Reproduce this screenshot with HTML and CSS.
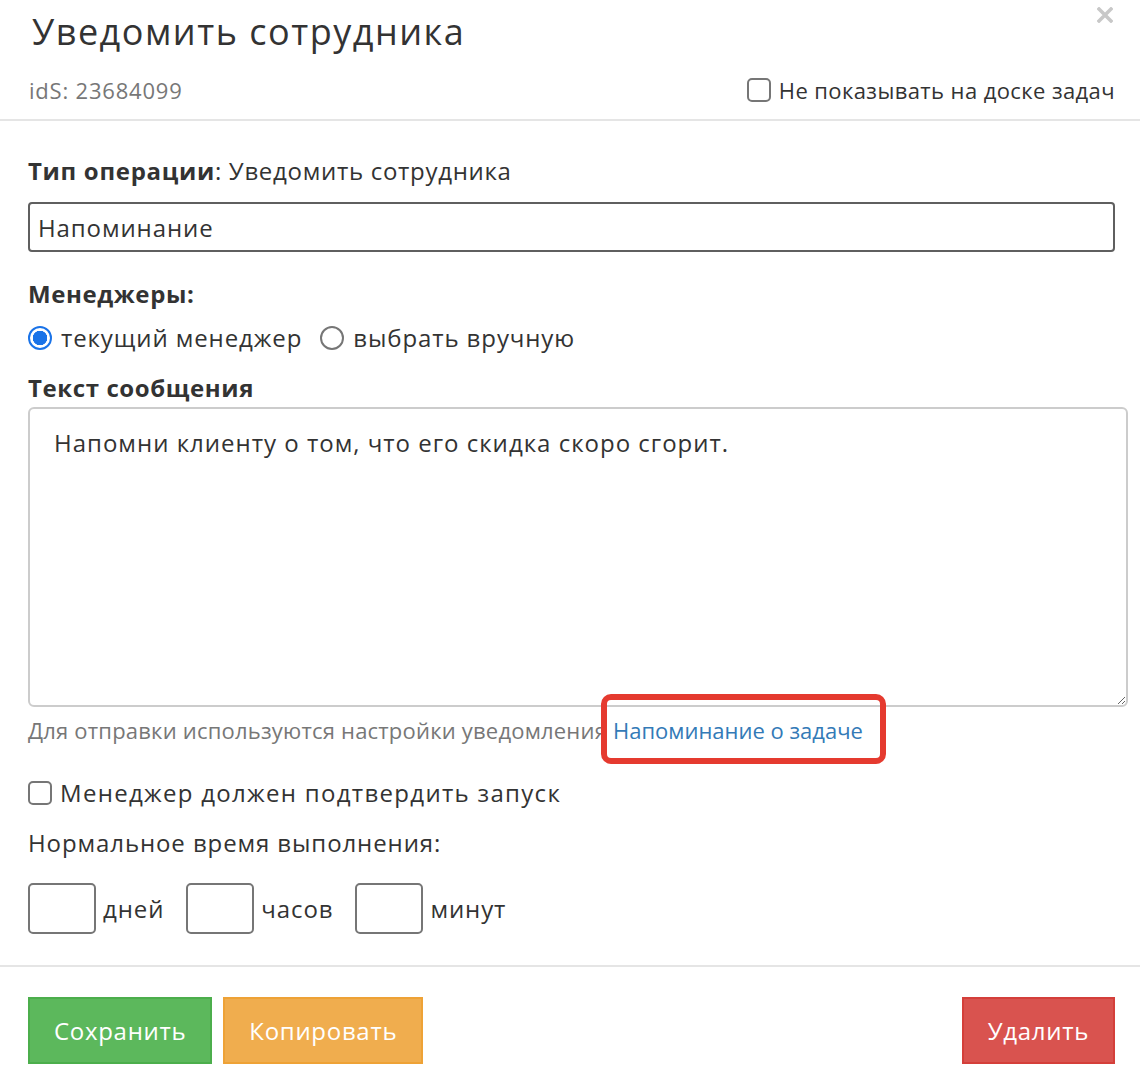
FILE: index.html
```html
<!DOCTYPE html>
<html lang="ru">
<head>
  <meta charset="UTF-8" />
  <title>Уведомить сотрудника</title>
  <link rel="stylesheet" href="styles.css">
</head>
<body>
  <div class="modal">
    <svg class="close" width="16" height="16" viewBox="0 0 16 16" aria-label="Закрыть">
      <path d="M2 2 L14 14 M14 2 L2 14" stroke="#c8c8c8" stroke-width="3.5" stroke-linecap="square" />
    </svg>

    <div class="modal-header">
      <h2>Уведомить сотрудника</h2>
      <div class="header-row">
        <span class="ids">idS: 23684099</span>
        <label class="check"><input type="checkbox" />Не показывать на доске задач</label>
      </div>
    </div>

    <div class="modal-body">
      <p class="op-type"><b>Тип операции</b>: Уведомить сотрудника</p>
      <input class="name-input" type="text" value="Напоминание" />

      <h4 class="managers">Менеджеры:</h4>
      <div class="radios">
        <label class="radio"><input type="radio" name="mgr" checked />текущий менеджер</label>
        <label class="radio"><input type="radio" name="mgr" />выбрать вручную</label>
      </div>

      <h4 class="msg-title">Текст сообщения</h4>
      <textarea class="message">Напомни клиенту о том, что его скидка скоро сгорит.</textarea>
      <p class="hint">Для отправки используются настройки уведомления <a href="#" class="marked">Напоминание о задаче</a></p>

      <label class="check confirm"><input type="checkbox" />Менеджер должен подтвердить запуск</label>

      <p class="time-label">Нормальное время выполнения:</p>
      <div class="time-row">
        <input type="text" class="small-input" /><span>дней</span>
        <input type="text" class="small-input" /><span>часов</span>
        <input type="text" class="small-input" /><span>минут</span>
      </div>
    </div>

    <div class="modal-footer">
      <button class="btn btn-success">Сохранить</button>
      <button class="btn btn-warning">Копировать</button>
      <button class="btn btn-danger">Удалить</button>
    </div>
  </div>
</body>
</html>
```

FILE: styles.css
```css
body {
  margin: 0;
  background: #fff;
  font-family: "Open Sans", Arial, sans-serif;
  color: #333;
  letter-spacing: 0.9px;
}

.modal {
  position: relative;
  width: 1140px;
}

.close {
  position: absolute;
  top: 7px;
  right: 27px;
}

.modal-header {
  padding: 6px 25px 0 29px;
  height: 113px;
  border-bottom: 2px solid #e5e5e5;
}

h2 {
  margin: 0 0 0 3px;
  font-size: 36px;
  font-weight: normal;
  line-height: 52px;
  letter-spacing: 1.5px;
}

.header-row {
  display: flex;
  justify-content: space-between;
  align-items: center;
  height: 30px;
  margin-top: 17px;
}

.ids {
  font-size: 22px;
  color: #777;
  letter-spacing: 0.8px;
}

.check {
  display: flex;
  align-items: center;
  font-size: 22px;
  letter-spacing: 0.4px;
}

input[type="checkbox"] {
  appearance: none;
  width: 24px;
  height: 24px;
  margin: 0 8px 0 0;
  border: 2px solid #767676;
  border-radius: 5px;
  background: #fff;
}

.modal-body {
  height: 846px;
  box-sizing: border-box;
  padding: 36px 25px 0 28px;
  border-bottom: 2px solid #e5e5e5;
}

.op-type {
  margin: 0 0 17px;
  font-size: 24px;
  line-height: 28px;
  letter-spacing: 0.7px;
}

.name-input {
  display: block;
  width: 100%;
  height: 50px;
  box-sizing: border-box;
  padding: 0 8px;
  border: 2px solid #5f5f5f;
  border-radius: 4px;
  font-family: inherit;
  font-size: 24px;
  letter-spacing: 0.9px;
  color: #333;
}

h4 {
  margin: 0;
  font-size: 24px;
  font-weight: bold;
  line-height: 30px;
  letter-spacing: 0.6px;
}

.managers {
  margin-top: 27px;
}

.radios {
  display: flex;
  gap: 18px;
  margin-top: 14px;
  font-size: 24px;
  line-height: 30px;
}

.radio {
  display: flex;
  align-items: center;
}

input[type="radio"] {
  appearance: none;
  width: 24px;
  height: 24px;
  margin: 0 9px 0 0;
  border: 2px solid #767676;
  border-radius: 50%;
  background: #fff;
}

input[type="radio"]:checked {
  border-color: #1a73e8;
  background: radial-gradient(circle, #1a73e8 0, #1a73e8 7px, #fff 7.5px);
}

.msg-title {
  margin-top: 20px;
}

.message {
  display: block;
  width: 1100px;
  height: 300px;
  box-sizing: border-box;
  margin-top: 4px;
  padding: 17px 24px;
  border: 2px solid #ccc;
  border-radius: 6px;
  font-family: inherit;
  font-size: 24px;
  letter-spacing: 1px;
  color: #333;
  resize: both;
}

.hint {
  margin: 8px 0 0;
  font-size: 22px;
  line-height: 30px;
  letter-spacing: 0.2px;
  color: #777;
}

.marked {
  position: relative;
  color: #337ab7;
  text-decoration: none;
  letter-spacing: 0;
}

.marked::after {
  content: "";
  position: absolute;
  left: -12px;
  right: -23px;
  top: -21px;
  bottom: -19px;
  border: 6px solid #e53a2f;
  border-radius: 10px;
}

.confirm {
  margin-top: 33px;
  font-size: 24px;
  line-height: 30px;
  letter-spacing: 1.3px;
}

.time-label {
  margin: 20px 0 0;
  font-size: 24px;
  line-height: 30px;
}

.time-row {
  display: flex;
  align-items: center;
  margin-top: 25px;
  font-size: 24px;
}

.small-input {
  width: 68px;
  height: 51px;
  box-sizing: border-box;
  margin: 0 7px 0 0;
  border: 2px solid #767676;
  border-radius: 5px;
}

.time-row span {
  margin-right: 22px;
}

.modal-footer {
  display: flex;
  gap: 11px;
  padding: 30px 25px 0 28px;
}

.btn {
  height: 67px;
  padding: 0 24px;
  border: 2px solid;
  font-family: inherit;
  font-size: 24px;
  letter-spacing: 0.7px;
  color: #fff;
}

.btn-success {
  background: #5cb85c;
  border-color: #4cae4c;
}

.btn-warning {
  background: #f0ad4e;
  border-color: #eea236;
}

.btn-danger {
  margin-left: auto;
  background: #d9534f;
  border-color: #d43f3a;
}
```
